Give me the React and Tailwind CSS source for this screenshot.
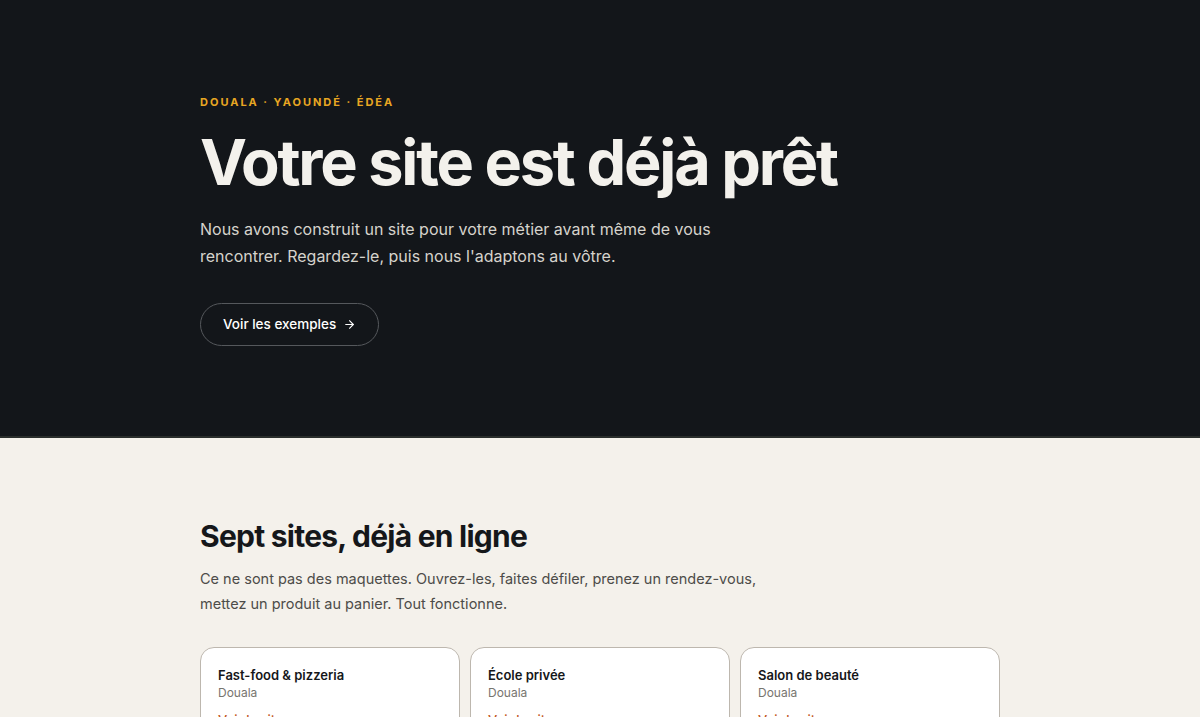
import { ArrowRight } from 'lucide-react';

const sites = [
  { name: 'Fast-food & pizzeria', city: 'Douala' },
  { name: 'École privée', city: 'Douala' },
  { name: 'Salon de beauté', city: 'Douala' },
];

export default function App() {
  return (
    <div className="min-h-screen bg-[#f4f1eb]" style={{ fontFamily: 'Inter, "Noto Sans", sans-serif' }}>
      <section className="bg-[#13161a] h-[438px] border-b-2 border-[#2a2e2c]">
        <div className="max-w-[800px] mx-auto pt-[94px]">
          <p className="text-[11px] font-bold tracking-[0.18em] text-[#e8a722] uppercase">
            Douala · Yaoundé · Édéa
          </p>
          <h1 className="mt-[17px] text-[63px] leading-[1.1] font-bold tracking-[-0.035em] text-[#f3f1ec]">
            Votre site est déjà prêt
          </h1>
          <p className="mt-[19px] max-w-[530px] text-[16px] leading-[27px] text-[#d6d3cc]">
            Nous avons construit un site pour votre métier avant même de vous rencontrer. Regardez-le, puis nous l'adaptons au vôtre.
          </p>
          <button className="mt-[33px] h-[43px] px-[22px] rounded-full border border-[#55585c] text-[13.5px] font-medium text-white flex items-center gap-[7px]">
            Voir les exemples
            <ArrowRight className="w-[13px] h-[13px]" strokeWidth={2} />
          </button>
        </div>
      </section>

      <section className="max-w-[800px] mx-auto pt-[79px]">
        <h2 className="text-[30px] leading-[38px] font-bold tracking-[-0.025em] text-[#15171a]">
          Sept sites, déjà en ligne
        </h2>
        <p className="mt-[11px] max-w-[580px] text-[14.5px] leading-[25px] text-[#4d4c49]">
          Ce ne sont pas des maquettes. Ouvrez-les, faites défiler, prenez un rendez-vous, mettez un produit au panier. Tout fonctionne.
        </p>
        <div className="mt-[31px] grid grid-cols-3 gap-[10px]">
          {sites.map((s) => (
            <div key={s.name} className="bg-white border border-[#bdb7ae] rounded-[14px] px-[17px] pt-[17px] pb-5">
              <h3 className="text-[13px] font-semibold text-[#15171a] leading-5">{s.name}</h3>
              <p className="mt-0 text-[12px] text-[#77756f] leading-4">{s.city}</p>
              <p className="mt-[9px] text-[13px] font-medium text-[#c2561e] leading-5">Voir le site</p>
            </div>
          ))}
        </div>
      </section>
    </div>
  );
}
